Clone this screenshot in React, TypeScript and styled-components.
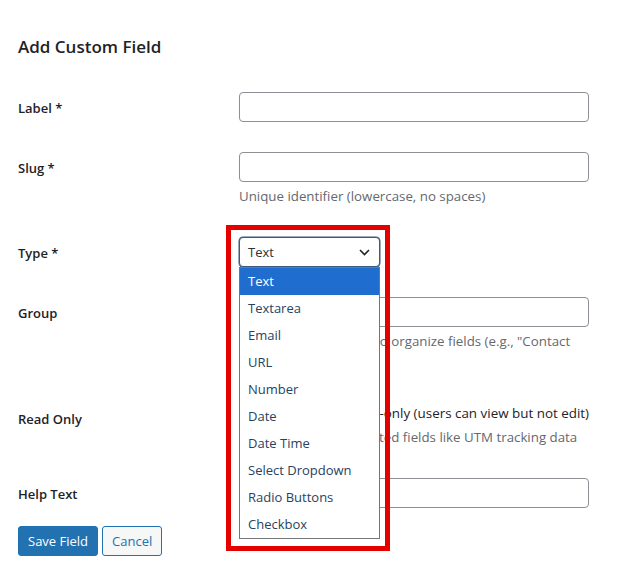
import React from "react";
import styled, { createGlobalStyle } from "styled-components";

const GlobalStyle = createGlobalStyle`
  body {
    margin: 0;
    background: #ffffff;
    font-family: "Open Sans", "Noto Sans", sans-serif;
    color: #1d2327;
  }
`;

const Page = styled.div`
  padding: 0 18px;
  width: 600px;
`;

const Title = styled.h2`
  margin: 36px 0 19px;
  font-size: 17px;
  line-height: 22px;
  font-weight: 600;
  color: #1d2327;
`;

const Row = styled.div`
  display: grid;
  grid-template-columns: 211px 370px;
`;

const Label = styled.div<{ $top?: number }>`
  padding: ${(p) => p.$top ?? 22}px 10px 18px 0;
  font-size: 13px;
  line-height: 18px;
  font-weight: 600;
  color: #1d2327;
`;

const Cell = styled.div`
  padding: 15px 10px;
`;

const Input = styled.div`
  box-sizing: border-box;
  width: 350px;
  height: 30px;
  border: 1px solid #8c8f94;
  border-radius: 4px;
  background: #fff;
`;

const Description = styled.p<{ $lines?: number }>`
  margin: 4px 0 0;
  font-size: 13.3px;
  line-height: 21px;
  min-height: ${(p) => (p.$lines ?? 1) * 21}px;
  color: #646970;
  white-space: nowrap;
`;

const CheckLine = styled.label`
  display: flex;
  align-items: center;
  gap: 5px;
  font-size: 13.4px;
  line-height: 20px;
  color: #1d2327;
  white-space: nowrap;
`;

const Checkbox = styled.span`
  box-sizing: border-box;
  width: 16px;
  height: 16px;
  border: 1px solid #8c8f94;
  border-radius: 4px;
  background: #fff;
`;

const SelectWrap = styled.div`
  position: relative;
  width: 141px;
`;

const SelectBox = styled.div`
  box-sizing: border-box;
  display: flex;
  align-items: center;
  justify-content: space-between;
  height: 30px;
  padding: 0 9px 0 8px;
  border: 1px solid #3b5b7c;
  box-shadow: 0 0 0 0.5px #3b5b7c;
  border-radius: 4px;
  background: #fff;
  font-size: 13px;
  color: #2c3338;
`;

const OptionList = styled.ul`
  position: absolute;
  top: 100%;
  left: 0;
  right: 0;
  z-index: 2;
  margin: 0;
  padding: 0;
  list-style: none;
  background: #fff;
  border: 1px solid #767676;
`;

const Option = styled.li<{ $active?: boolean }>`
  height: 27px;
  padding-left: 8px;
  font-size: 13px;
  line-height: 27px;
  background: ${(p) => (p.$active ? "#1f6dcf" : "#fff")};
  color: ${(p) => (p.$active ? "#ffffff" : "#27435f")};
`;

const Highlight = styled.div`
  position: absolute;
  left: -13px;
  top: -12px;
  width: 164px;
  height: 326px;
  box-sizing: border-box;
  border: 5px solid #e50000;
  z-index: 3;
  pointer-events: none;
`;

const Actions = styled.div`
  display: flex;
  gap: 4px;
  margin-top: 3px;
`;

const Button = styled.button<{ $primary?: boolean }>`
  height: 30px;
  padding: 0 9px;
  border: 1px solid #2271b1;
  border-radius: 3px;
  font-family: inherit;
  font-size: 13px;
  background: ${(p) => (p.$primary ? "#2271b1" : "#f6f7f7")};
  color: ${(p) => (p.$primary ? "#ffffff" : "#2271b1")};
`;

const Chevron = () => (
  <svg width="11" height="7" viewBox="0 0 11 7" fill="none">
    <path d="M1 1l4.5 4.5L10 1" stroke="#1d2327" strokeWidth="1.6" />
  </svg>
);

const types = [
  "Text",
  "Textarea",
  "Email",
  "URL",
  "Number",
  "Date",
  "Date Time",
  "Select Dropdown",
  "Radio Buttons",
  "Checkbox",
];

export default function App() {
  return (
    <>
      <GlobalStyle />
      <Page>
        <Title>Add Custom Field</Title>

        <Row>
          <Label>Label *</Label>
          <Cell>
            <Input />
          </Cell>
        </Row>

        <Row>
          <Label>Slug *</Label>
          <Cell>
            <Input />
            <Description>Unique identifier (lowercase, no spaces)</Description>
          </Cell>
        </Row>

        <Row>
          <Label>Type *</Label>
          <Cell>
            <SelectWrap>
              <SelectBox>
                Text
                <Chevron />
              </SelectBox>
              <OptionList>
                {types.map((t, i) => (
                  <Option key={t} $active={i === 0}>
                    {t}
                  </Option>
                ))}
              </OptionList>
              <Highlight />
            </SelectWrap>
          </Cell>
        </Row>

        <Row>
          <Label>Group</Label>
          <Cell>
            <Input />
            <Description $lines={2}>
              Optional group name to organize fields (e.g., "Contact
            </Description>
          </Cell>
        </Row>

        <Row>
          <Label>Read Only</Label>
          <Cell>
            <CheckLine>
              <Checkbox />
              Make this field read-only (users can view but not edit)
            </CheckLine>
            <Description>
              Useful for auto-populated fields like UTM tracking data
            </Description>
          </Cell>
        </Row>

        <Row>
          <Label>Help Text</Label>
          <Cell>
            <Input />
          </Cell>
        </Row>

        <Actions>
          <Button $primary>Save Field</Button>
          <Button>Cancel</Button>
        </Actions>
      </Page>
    </>
  );
}
